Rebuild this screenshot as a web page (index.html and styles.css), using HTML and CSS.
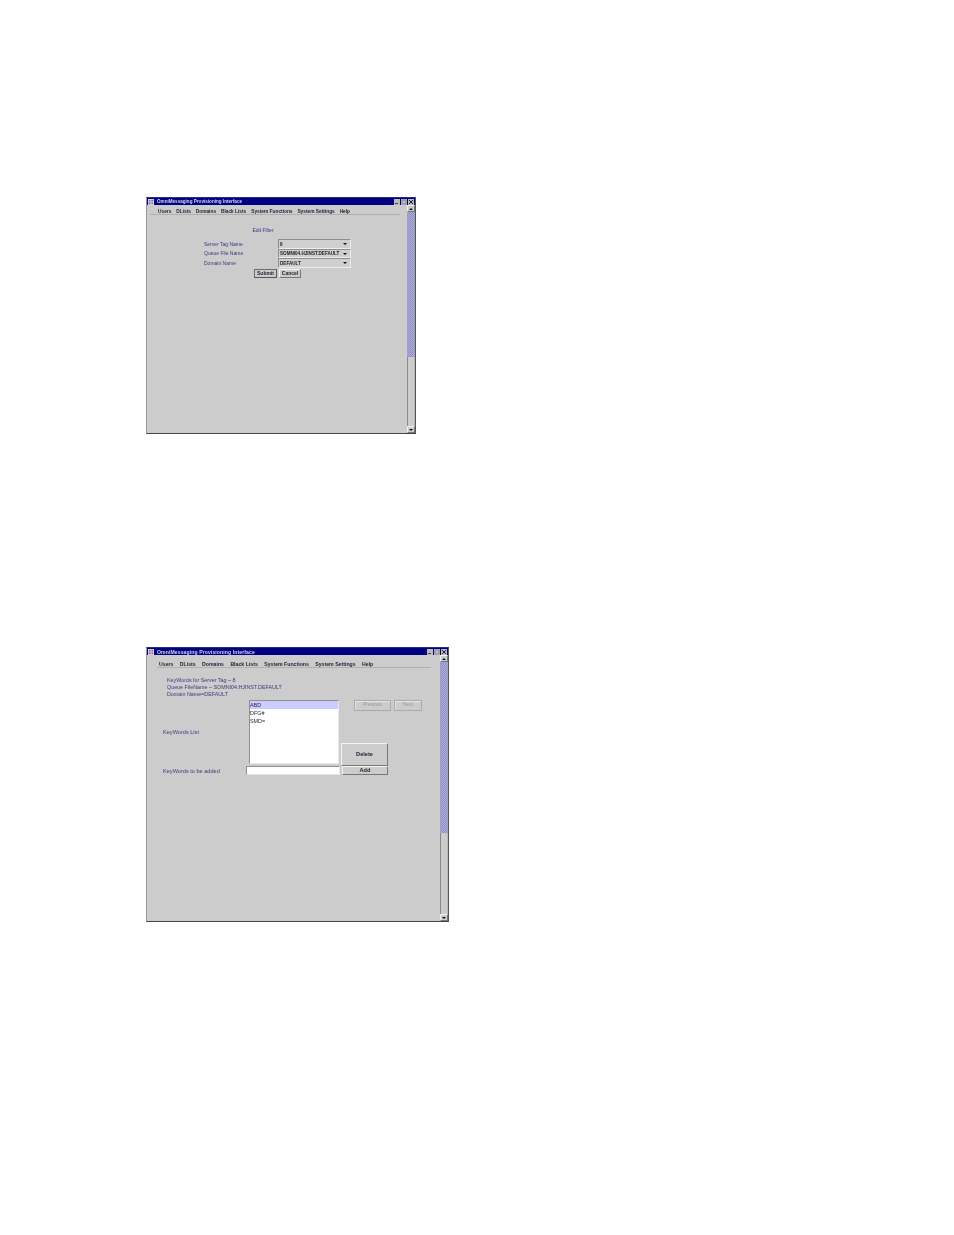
FILE: index.html
```html
<!DOCTYPE html>
<html lang="en">
<head>
<meta charset="utf-8">
<title>OmniMessaging Provisioning Interface</title>
<link rel="stylesheet" href="styles.css">
</head>
<body>
<div class="page">
  <section class="window win-filter">
    <header class="titlebar">
      <svg class="appicon" viewBox="0 0 7 7"><rect width="7" height="7" fill="#d8d8ec"/><rect x="1" y="1" width="2" height="2" fill="#c86070"/><rect x="4" y="1" width="2" height="2" fill="#6070b0"/><rect x="1" y="4" width="2" height="2" fill="#6070b0"/><rect x="4" y="4" width="2" height="2" fill="#c86070"/></svg>
      <span class="title">OmniMessaging Provisioning Interface</span>
      <span class="ctrls">
        <svg class="ctrl" viewBox="0 0 6 6"><rect x="1" y="4" width="3" height="1" fill="#444"/></svg>
        <svg class="ctrl" viewBox="0 0 6 6"><rect x="1" y="1" width="4" height="4" fill="none" stroke="#777" stroke-width=".7"/></svg>
        <svg class="ctrl" viewBox="0 0 6 6"><path d="M1 1l4 4M5 1l-4 4" stroke="#222" stroke-width="1"/></svg>
      </span>
    </header>
    <div class="client">
      <main class="main">
        <nav class="menu">
          <span>Users</span><span>DLists</span><span>Domains</span><span>Black Lists</span><span>System Functions</span><span>System Settings</span><span>Help</span>
        </nav>
        <h1 class="heading">Edit Filter</h1>
        <div class="filter-form">
          <label class="lbl">Server Tag Name</label><div class="select"><span>8</span><i class="caret"></i></div>
          <label class="lbl">Queue File Name</label><div class="select"><span>SOMNI04.HJINST.DEFAULT</span><i class="caret"></i></div>
          <label class="lbl">Domain Name</label><div class="select"><span>DEFAULT</span><i class="caret"></i></div>
        </div>
        <div class="filter-actions">
          <button class="btn submit">Submit</button><button class="btn cancel">Cancel</button>
        </div>
      </main>
      <aside class="scrollbar">
        <div class="arrow"><i class="up"></i></div>
        <div class="track"><div class="thumb"></div></div>
        <div class="arrow"><i class="down"></i></div>
      </aside>
    </div>
  </section>

  <section class="window win-keywords">
    <header class="titlebar">
      <svg class="appicon" viewBox="0 0 7 7"><rect width="7" height="7" fill="#d8d8ec"/><rect x="1" y="1" width="2" height="2" fill="#c86070"/><rect x="4" y="1" width="2" height="2" fill="#6070b0"/><rect x="1" y="4" width="2" height="2" fill="#6070b0"/><rect x="4" y="4" width="2" height="2" fill="#c86070"/></svg>
      <span class="title">OmniMessaging Provisioning Interface</span>
      <span class="ctrls">
        <svg class="ctrl" viewBox="0 0 6 6"><rect x="1" y="4" width="3" height="1" fill="#444"/></svg>
        <svg class="ctrl" viewBox="0 0 6 6"><rect x="1" y="1" width="4" height="4" fill="none" stroke="#777" stroke-width=".7"/></svg>
        <svg class="ctrl" viewBox="0 0 6 6"><path d="M1 1l4 4M5 1l-4 4" stroke="#222" stroke-width="1"/></svg>
      </span>
    </header>
    <div class="client">
      <main class="main">
        <nav class="menu">
          <span>Users</span><span>DLists</span><span>Domains</span><span>Black Lists</span><span>System Functions</span><span>System Settings</span><span>Help</span>
        </nav>
        <div class="info">
          <p>KeyWords for Server Tag ~ 8</p>
          <p>Queue FileName ~ SOMNI04.HJINST.DEFAULT</p>
          <p>Domain Name=DEFAULT</p>
        </div>
        <div class="kw-grid">
          <label class="lbl kw-list-label">KeyWords List</label>
          <ul class="listbox">
            <li class="selected">ABD</li>
            <li>DFG#</li>
            <li>SMD=</li>
          </ul>
          <div class="pager">
            <button class="btn ghost prev">Previous</button><button class="btn ghost next">Next</button>
          </div>
          <button class="btn delete">Delete</button>
          <label class="lbl kw-add-label">KeyWords to be added</label>
          <div class="textfield"></div>
          <button class="btn add">Add</button>
        </div>
      </main>
      <aside class="scrollbar">
        <div class="arrow"><i class="up"></i></div>
        <div class="track"><div class="thumb"></div></div>
        <div class="arrow"><i class="down"></i></div>
      </aside>
    </div>
  </section>
</div>
</body>
</html>
```
FILE: styles.css
```css
* { box-sizing: border-box; }
html, body { margin: 0; padding: 0; background: #fff; }
body { width: 954px; height: 1235px; overflow: hidden; font-family: "Liberation Sans", Arial, sans-serif; }
.page { padding: 197px 0 0 146px; display: flex; flex-direction: column; align-items: flex-start; }

.window { display: flex; flex-direction: column; background: #cccccc; border: 1px solid #999; border-top-color: #2a2a86; border-right-color: #555; border-bottom-color: #444; filter: blur(.3px); }
.win-filter { width: 270px; height: 237px; --fs: 5px; --thumb: 145px; }
.win-keywords { width: 303px; height: 275px; margin-top: 213px; --fs: 5.6px; --thumb: 171px; }

.titlebar { flex: none; height: 7px; background: #000080; display: flex; align-items: center; padding: 0 1px; color: #d4d6ee; }
.appicon { width: 6px; height: 6px; flex: none; }
.title { margin-left: 3px; font-size: 4.6px; font-weight: 700; white-space: nowrap; }
.win-keywords .title { font-size: 5.1px; letter-spacing: .1px; }
.ctrls { margin-left: auto; display: flex; gap: 1px; }
.ctrl { width: 6px; height: 6px; background: #bcbcbc; display: block; }

.client { flex: 1; min-height: 0; display: flex; }
.main { flex: 1; min-width: 0; padding-left: 3px; }

.menu { display: flex; height: 10px; width: 250px; padding: 4px 0 0 8px; border-bottom: 1px solid #b0b0b0; font-size: 4.8px; line-height: 5px; font-weight: 700; color: #1f1f33; white-space: nowrap; gap: 4.9px; }
.win-keywords .menu { width: 274px; height: 13px; padding: 7px 0 0 2px; margin-left: 7px; font-size: 5.2px; gap: 6.4px; }

.heading { margin: 12px 0 0; width: 226px; text-align: center; font-size: 5px; line-height: 6px; font-weight: 400; color: #3a3a80; }
.lbl { font-size: var(--fs); line-height: 6px; color: #3a3a80; }

.filter-form { margin: 6px 0 0 54px; display: grid; grid-template-columns: 74px 73px; grid-auto-rows: 9.6px; align-items: center; }
.select { height: 9.6px; display: flex; align-items: center; justify-content: space-between; padding: 1px 3px 0 1px; background: #cfcfcf; border: 1px solid #8e8e8e; border-right-color: #eee; border-bottom-color: #eee; font-size: 4.6px; font-weight: 700; color: #20202c; white-space: nowrap; }
.caret { width: 0; height: 0; border: 2.5px solid transparent; border-top: 2.5px solid #111; border-bottom: 0; flex: none; }

.btn { display: block; margin: 0; padding: 0; background: #cccccc; border: 1px solid; border-color: #f4f4f4 #777 #777 #f4f4f4; font: 700 var(--fs)/1 "Liberation Sans", Arial, sans-serif; color: #1f1f33; }
.filter-actions { display: flex; margin: 1px 0 0 104px; gap: 2px; }
.submit { width: 23px; height: 9px; border-color: #6a6a6a #555 #555 #6a6a6a; }
.cancel { width: 22px; height: 9px; }

.info { margin: 9px 0 0 17px; }
.info p { margin: 0; font-size: 5.35px; line-height: 7px; color: #3a3a80; white-space: nowrap; }

.kw-grid { margin: 2px 0 0 13px; display: grid; grid-template-columns: 83px 95px 81px; grid-template-rows: 43px 23px 9px; }
.kw-list-label { grid-column: 1; grid-row: 1; align-self: start; margin-top: 29px; }
.listbox { grid-column: 2; grid-row: 1 / 3; margin: 0 0 0 3px; padding: 0; list-style: none; width: 90px; height: 64px; background: #fff; border: 1px solid #8f8f8f; border-right-color: #e8e8e8; border-bottom-color: #e8e8e8; font-size: 5.4px; color: #2a2a38; }
.listbox li { height: 8px; line-height: 8px; padding-left: 0; }
.listbox .selected { background: #ccccff; }
.pager { grid-column: 3; grid-row: 1; display: flex; gap: 3px; padding-left: 13px; align-items: flex-start; }
.ghost { height: 11px; background: #cccccc; border-color: #aaa; box-shadow: inset 1px 1px 0 #e4e4e4; font-size: 4.8px; font-weight: 400; color: #989898; flex: none; }
.prev { width: 37px; }
.next { width: 28px; }
.delete { grid-column: 3; grid-row: 2; width: 47px; height: 23px; }
.kw-add-label { grid-column: 1; grid-row: 3; align-self: center; }
.textfield { grid-column: 2; grid-row: 3; width: 94px; height: 9px; background: #fff; border: 1px solid #8f8f8f; border-right-color: #e8e8e8; border-bottom-color: #e8e8e8; }
.add { grid-column: 3; grid-row: 3; width: 46px; height: 9px; margin-left: 1px; }

.scrollbar { flex: none; width: 8px; display: flex; flex-direction: column; }
.arrow { flex: none; height: 7px; background: #cccccc; border: 1px solid; border-color: #f0f0f0 #777 #777 #f0f0f0; display: flex; align-items: center; justify-content: center; }
.arrow i { width: 0; height: 0; border: 2px solid transparent; }
.arrow .up { border-top: 0; border-bottom: 2px solid #111; }
.arrow .down { border-bottom: 0; border-top: 2px solid #111; }
.track { flex: 1; min-height: 0; background: #cccccc; border-left: 1px solid #8a8a8a; border-right: 1px solid #b8b8b8; }
.thumb { height: var(--thumb); margin: 0 -1px; background-color: #9c9cd0; background-image: repeating-conic-gradient(#8f8fc4 0 25%, #aeaed8 0 50%); background-size: 2px 2px; }
```
